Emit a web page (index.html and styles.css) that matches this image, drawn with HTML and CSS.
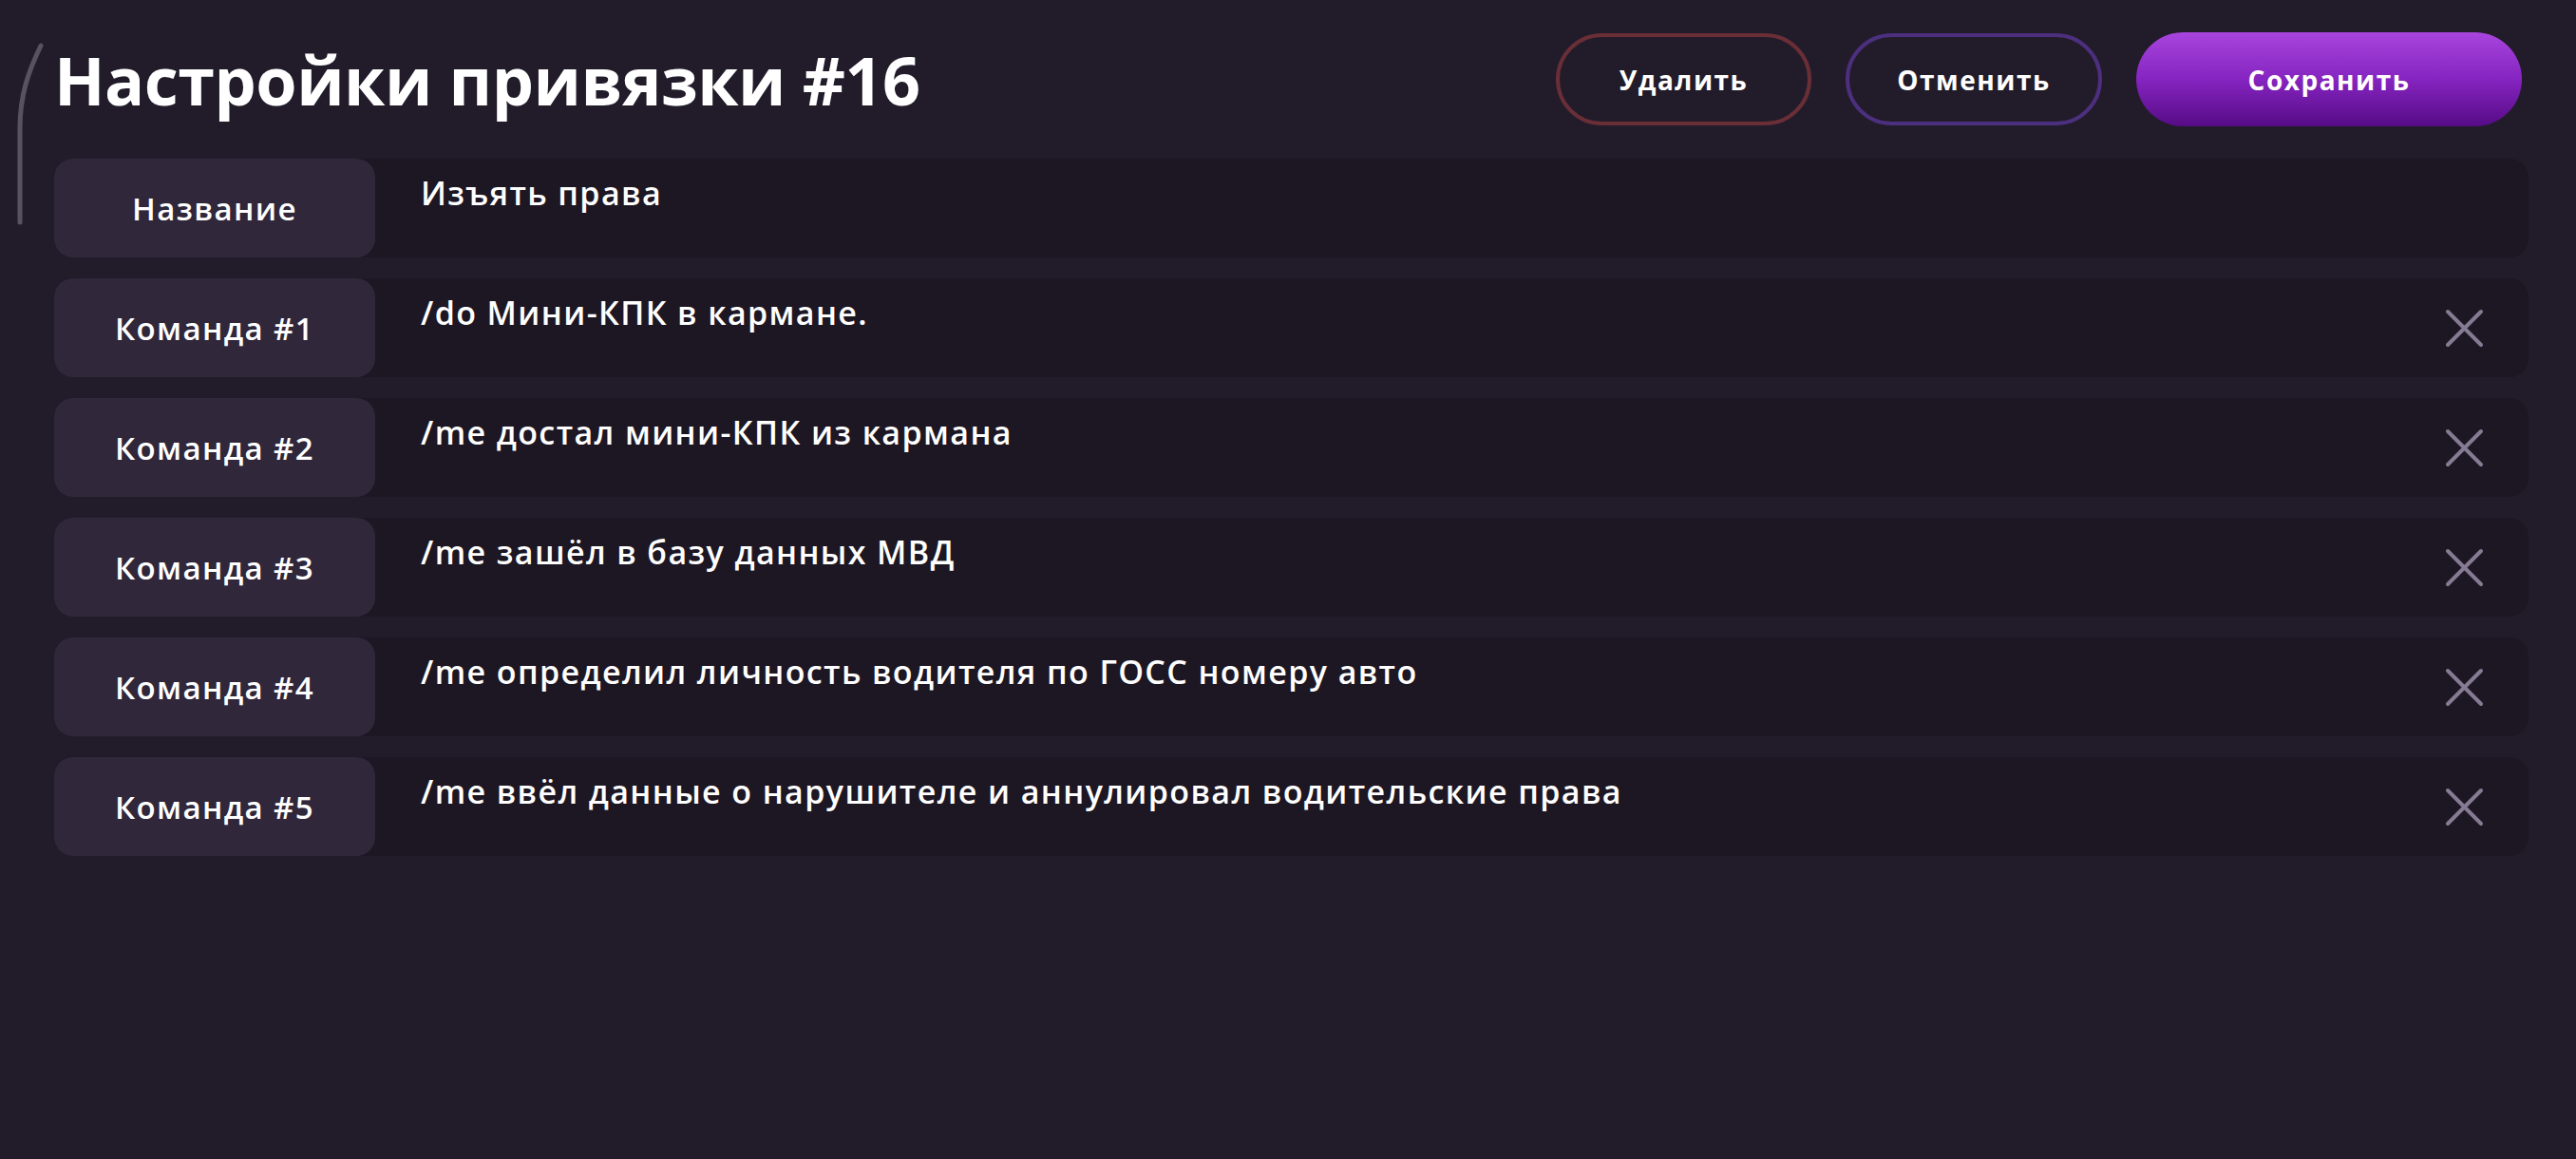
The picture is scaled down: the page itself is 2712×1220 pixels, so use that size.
FILE: index.html
```html
<!DOCTYPE html>
<html lang="ru">
<head>
<meta charset="utf-8">
<title>Настройки привязки #16</title>
<link rel="stylesheet" href="styles.css">
</head>
<body>
<div class="page">
  <svg class="scroll-ind" width="60" height="250" viewBox="0 0 60 250"><path d="M43 48 C30 75 21 100 21 135 L21 234" fill="none" stroke="#57525d" stroke-width="5" stroke-linecap="round"/></svg>
  <header class="header">
    <h1 class="title">Настройки привязки #16</h1>
    <div class="actions">
      <button class="btn btn-delete">Удалить</button>
      <button class="btn btn-cancel">Отменить</button>
      <button class="btn btn-save">Сохранить</button>
    </div>
  </header>
  <div class="rows">
    <div class="row">
      <div class="label">Название</div>
      <div class="value">Изъять права</div>
    </div>
    <div class="row">
      <div class="label">Команда #1</div>
      <div class="value">/do Мини-КПК в кармане.</div>
      <div class="remove"><svg width="41" height="41" viewBox="0 0 41 41"><path d="M3 3 L38 38 M38 3 L3 38" stroke="#867b93" stroke-width="4" stroke-linecap="round"/></svg></div>
    </div>
    <div class="row">
      <div class="label">Команда #2</div>
      <div class="value">/me достал мини-КПК из кармана</div>
      <div class="remove"><svg width="41" height="41" viewBox="0 0 41 41"><path d="M3 3 L38 38 M38 3 L3 38" stroke="#867b93" stroke-width="4" stroke-linecap="round"/></svg></div>
    </div>
    <div class="row">
      <div class="label">Команда #3</div>
      <div class="value">/me зашёл в базу данных МВД</div>
      <div class="remove"><svg width="41" height="41" viewBox="0 0 41 41"><path d="M3 3 L38 38 M38 3 L3 38" stroke="#867b93" stroke-width="4" stroke-linecap="round"/></svg></div>
    </div>
    <div class="row">
      <div class="label">Команда #4</div>
      <div class="value">/me определил личность водителя по ГОСС номеру авто</div>
      <div class="remove"><svg width="41" height="41" viewBox="0 0 41 41"><path d="M3 3 L38 38 M38 3 L3 38" stroke="#867b93" stroke-width="4" stroke-linecap="round"/></svg></div>
    </div>
    <div class="row">
      <div class="label">Команда #5</div>
      <div class="value">/me ввёл данные о нарушителе и аннулировал водительские права</div>
      <div class="remove"><svg width="41" height="41" viewBox="0 0 41 41"><path d="M3 3 L38 38 M38 3 L3 38" stroke="#867b93" stroke-width="4" stroke-linecap="round"/></svg></div>
    </div>
  </div>
</div>
</body>
</html>
```

FILE: styles.css
```css
html, body {
  margin: 0;
  padding: 0;
  background: #221c2a;
  height: 100%;
}
body {
  font-family: "Open Sans", "Noto Sans", sans-serif;
  color: #ffffff;
}
.page {
  position: relative;
  padding: 34px 50px 0 57px;
}
.scroll-ind {
  position: absolute;
  left: 0;
  top: 0;
}
.header {
  display: flex;
  align-items: center;
  justify-content: space-between;
  height: 99px;
  padding-right: 7px;
}
.title {
  margin: 0;
  font-size: 70px;
  font-weight: 700;
  line-height: 1;
  letter-spacing: -0.5px;
}
.actions {
  display: flex;
  align-items: center;
  gap: 36px;
}
.btn {
  font-family: inherit;
  font-size: 28px;
  font-weight: 700;
  color: #ffffff;
  border-radius: 50px;
  height: 97px;
  background: transparent;
  letter-spacing: 1.5px;
  padding: 0;
}
.btn-delete {
  width: 269px;
  border: 4px solid #6a2e37;
}
.btn-cancel {
  width: 270px;
  border: 4px solid #4c2f7e;
}
.btn-save {
  width: 406px;
  height: 99px;
  border: none;
  background: linear-gradient(180deg, #a945de 0%, #8524c0 50%, #560b86 100%);
}
.rows {
  margin-top: 34px;
  display: flex;
  flex-direction: column;
  gap: 22px;
}
.row {
  display: flex;
  height: 104px;
  background: #1d1724;
  border-radius: 20px;
}
.label {
  width: 338px;
  flex: none;
  display: flex;
  align-items: center;
  justify-content: center;
  background: #30273b;
  border-radius: 20px;
  font-size: 33px;
  font-weight: 600;
  letter-spacing: 1.4px;
}
.value {
  flex: 1;
  padding: 16px 0 0 48px;
  font-size: 34px;
  font-weight: 600;
  line-height: 40px;
  letter-spacing: 1.4px;
}
.remove {
  display: flex;
  align-items: center;
  padding-right: 47px;
}
.remove svg {
  display: block;
}
```
